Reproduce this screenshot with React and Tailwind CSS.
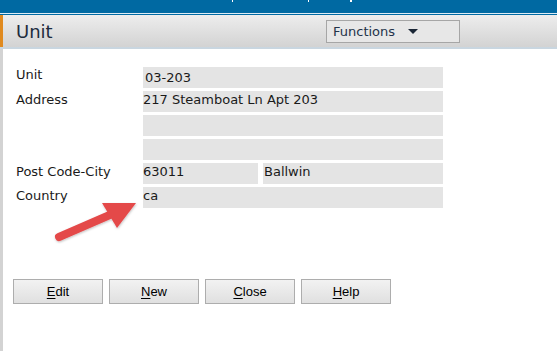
import React from "react";

const font = { fontFamily: "'DejaVu Sans', Verdana, sans-serif" };

const rows = [
  { label: "Unit", value: "03-203", first: true },
  { label: "Address", value: "217 Steamboat Ln Apt 203" },
  { label: "", value: "" },
  { label: "", value: "" },
  { label: "Post Code-City", value: "63011", city: "Ballwin" },
  { label: "Country", value: "ca" },
];

const Field = ({ children, className = "" }) => (
  <div className={`h-[21px] bg-[#e4e4e4] text-[13px] leading-[17px] text-[#1a1a1a] ${className}`}>{children}</div>
);

const Btn = ({ k, rest }) => (
  <button
    className="w-[90px] h-[25px] border border-[#adadad] bg-gradient-to-b from-[#f2f2f2] to-[#e0e0e0] text-[13px] text-black flex items-center justify-center"
    style={{ fontFamily: "'Liberation Sans', Arial, sans-serif" }}
  >
    <span className="underline underline-offset-[2px]">{k}</span>
    {rest}
  </button>
);

export default function App() {
  return (
    <div className="relative w-[557px] h-[351px] bg-white overflow-hidden" style={font}>
      {/* window title bar (cut off) */}
      <div className="relative h-[13px] bg-[#0069a2]">
        <span className="absolute left-[232px] top-0 w-px h-[2px] bg-white" />
        <span className="absolute left-[308px] top-0 w-px h-[2px] bg-white" />
        <span className="absolute left-[350px] top-0 w-[2px] h-[2px] bg-white" />
      </div>
      <div className="h-px bg-[#dcebf4]" />
      <div className="h-px bg-[#0069a2]" />

      {/* header */}
      <div className="h-[32px] flex items-center bg-gradient-to-b from-[#ededed] to-[#d3d3d3] border-l-[3px] border-[#e08a1f]">
        <div className="w-[323px] pl-[13px] text-[18px] text-[#1c2b3d]">Unit</div>
        <div className="w-[134px] h-[23px] mt-[1px] border border-[#a6a6a6] bg-[#e7e7e7] flex items-center pl-[6px] text-[13px] text-[#23334a]">
          <span>Functions</span>
          <span className="ml-[13px] w-0 h-0 border-l-[5px] border-r-[5px] border-t-[5px] border-l-transparent border-r-transparent border-t-[#1a2636]" />
        </div>
      </div>
      <div className="h-[2px] bg-[#c9d6e0]" />

      {/* body */}
      <div className="h-[302px] border-l-[3px] border-[#d3d3d3] pl-[13px] pt-[18px]">
        <div className="grid grid-cols-[127px_300px] gap-y-[3px]">
          {rows.map((r, i) => (
            <React.Fragment key={i}>
              <div className={`h-[21px] text-[13px] text-[#1a1a1a] ${r.first ? "leading-[15px]" : "leading-[17px]"}`}>{r.label}</div>
              {r.city !== undefined ? (
                <div className="flex gap-[5px]">
                  <Field className="w-[115px]">{r.value}</Field>
                  <Field className="flex-1 pl-[1px]">{r.city}</Field>
                </div>
              ) : (
                <Field className={r.first ? "pl-[2px] pt-[2px]" : ""}>{r.value}</Field>
              )}
            </React.Fragment>
          ))}
        </div>

        <div className="flex gap-[6px] mt-[71px] -ml-[3px]">
          <Btn k="E" rest="dit" />
          <Btn k="N" rest="ew" />
          <Btn k="C" rest="lose" />
          <Btn k="H" rest="elp" />
        </div>
      </div>

      {/* annotation arrow */}
      <svg className="absolute left-0 top-0 pointer-events-none" width="557" height="351" viewBox="0 0 557 351">
        <defs>
          <filter id="sh" x="-20%" y="-20%" width="140%" height="140%">
            <feDropShadow dx="0.5" dy="1" stdDeviation="1" floodColor="#000" floodOpacity="0.25" />
          </filter>
        </defs>
        <g filter="url(#sh)">
          <line x1="59" y1="237" x2="112" y2="214" stroke="#e4494a" strokeWidth="8" strokeLinecap="round" />
          <polygon points="102,203 136,203 117,228" fill="#e4494a" />
        </g>
      </svg>
    </div>
  );
}
